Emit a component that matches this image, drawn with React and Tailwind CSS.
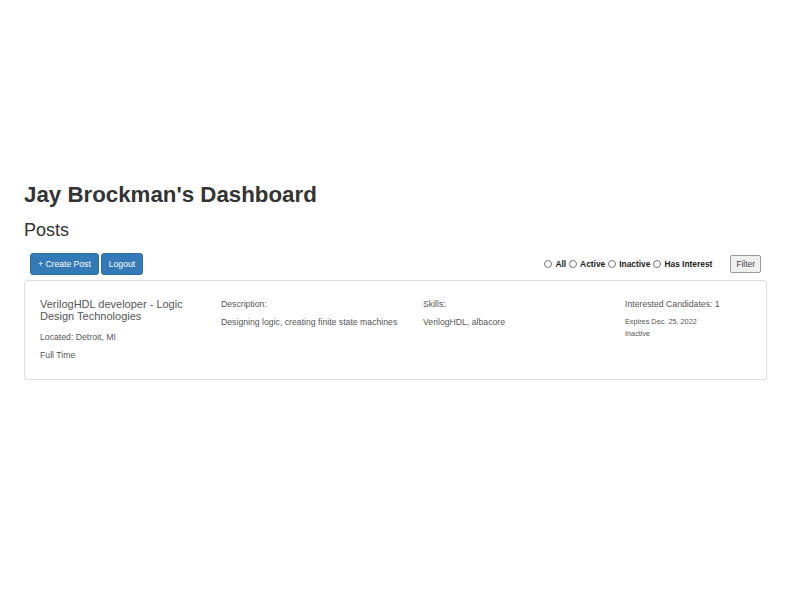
export default function App() {
  const radios = ["All", "Active", "Inactive", "Has Interest"];
  return (
    <div className="min-h-[600px] bg-white font-['Liberation_Sans',Arial,sans-serif] text-[#333] pl-[24px] pr-[33px] pt-[183px]">
      <h1 className="text-[22.3px] font-bold leading-[1.1]">Jay Brockman's Dashboard</h1>
      <h2 className="mt-[13px] text-[18px] leading-[1.1]">Posts</h2>
      <div className="mt-[13px] flex items-center justify-between px-[6px]">
        <div className="flex gap-[2px]">
          <button className="bg-[#337ab7] border border-[#2e6da4] rounded-[3px] text-white text-[8.6px] leading-[12px] px-[7px] py-[3.6px]">
            + Create Post
          </button>
          <button className="bg-[#337ab7] border border-[#2e6da4] rounded-[3px] text-white text-[8.6px] leading-[12px] px-[7px] py-[3.6px]">
            Logout
          </button>
        </div>
        <div className="flex items-center">
          <div className="flex items-center text-[8.4px] font-bold text-[#222]">
            {radios.map((r) => (
              <label key={r} className="flex items-center">
                <span className="w-[8px] h-[8px] rounded-full border border-[#777] bg-white mr-[3px]" />
                <span className="mr-[3px]">{r}</span>
              </label>
            ))}
          </div>
          <button className="ml-[15px] h-[18px] px-[5px] bg-[#efefef] border border-[#999] rounded-[2px] text-[8.4px] text-[#444]">
            Filter
          </button>
        </div>
      </div>
      <div className="mt-[5px] border border-[#ddd] rounded-[3px] pl-[15px] pr-[16px] pt-[17px] pb-[18px] text-[8.7px] leading-[12px] text-[#555] grid grid-cols-[181px_202px_202px_1fr]">
        <div className="pr-[12px]">
          <h4 className="text-[11px] leading-[1.1] text-[#555]">VerilogHDL developer - Logic Design Technologies</h4>
          <p className="mt-[9px]">Located: Detroit, MI</p>
          <p className="mt-[6px]">Full Time</p>
        </div>
        <div>
          <p>Description:</p>
          <p className="mt-[6px]">Designing logic, creating finite state machines</p>
        </div>
        <div>
          <p>Skills:</p>
          <p className="mt-[6px]">VerilogHDL, albacore</p>
        </div>
        <div>
          <p>Interested Candidates: 1</p>
          <p className="mt-[6px] text-[7.3px]">
            Expires Dec. 25, 2022
            <br />
            Inactive
          </p>
        </div>
      </div>
    </div>
  );
}
